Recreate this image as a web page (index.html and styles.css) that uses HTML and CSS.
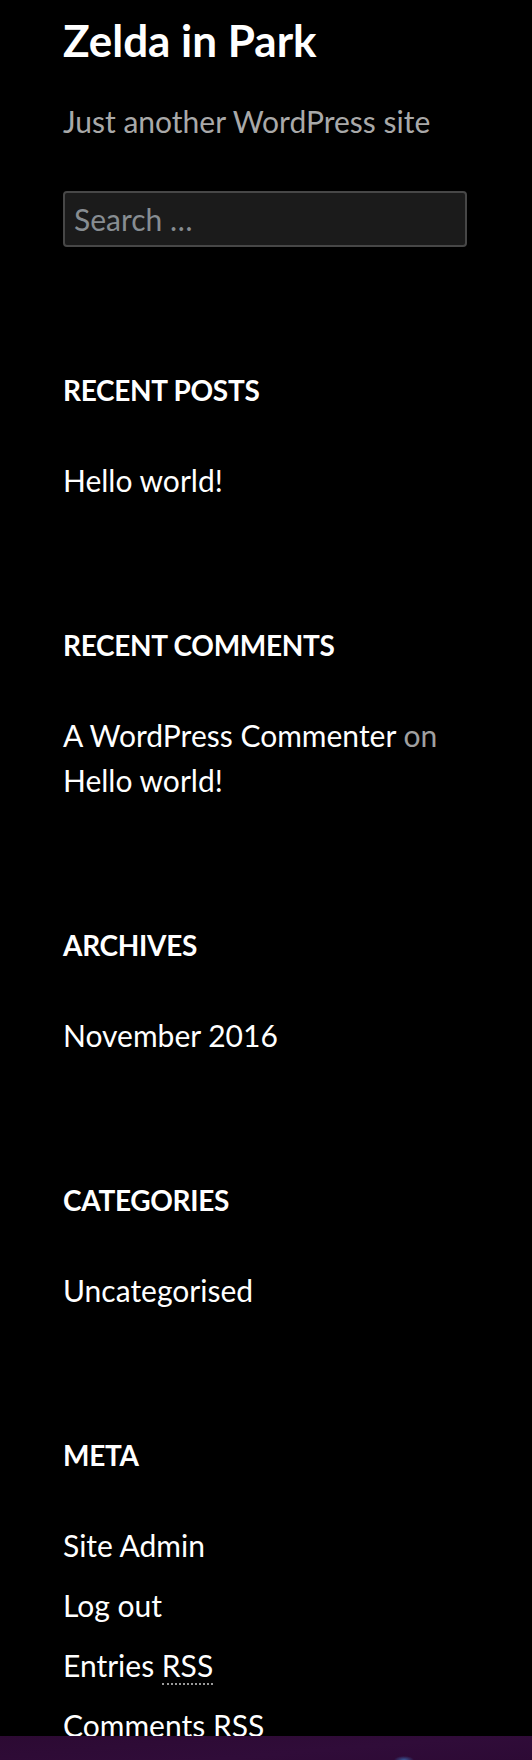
FILE: index.html
```html
<!DOCTYPE html>
<html lang="en">
<head>
<meta charset="utf-8">
<title>Zelda in Park</title>
<link rel="stylesheet" href="styles.css">
</head>
<body>
<div class="site">
  <header class="site-header">
    <h1 class="site-title"><a href="#">Zelda in Park</a></h1>
    <p class="site-description">Just another WordPress site</p>
    <form class="search-form">
      <input class="search-field" type="search" placeholder="Search …">
    </form>
  </header>

  <section class="widget">
    <h2 class="widget-title">Recent Posts</h2>
    <ul class="widget-list">
      <li><a href="#">Hello world!</a></li>
    </ul>
  </section>

  <section class="widget">
    <h2 class="widget-title">Recent Comments</h2>
    <ul class="widget-list">
      <li><a href="#">A WordPress Commenter</a> <span class="muted">on</span> <a href="#">Hello world!</a></li>
    </ul>
  </section>

  <section class="widget">
    <h2 class="widget-title">Archives</h2>
    <ul class="widget-list">
      <li><a href="#">November 2016</a></li>
    </ul>
  </section>

  <section class="widget">
    <h2 class="widget-title">Categories</h2>
    <ul class="widget-list">
      <li><a href="#">Uncategorised</a></li>
    </ul>
  </section>

  <section class="widget">
    <h2 class="widget-title">Meta</h2>
    <ul class="widget-list meta-list">
      <li><a href="#">Site Admin</a></li>
      <li><a href="#">Log out</a></li>
      <li><a href="#">Entries <abbr title="Really Simple Syndication">RSS</abbr></a></li>
      <li><a href="#">Comments <abbr title="Really Simple Syndication">RSS</abbr></a></li>
    </ul>
  </section>
</div>
<div class="taskbar"></div>
</body>
</html>
```

FILE: styles.css
```css
html, body {
  margin: 0;
  padding: 0;
  background: #000;
}

body {
  font-family: Lato, "Open Sans", "Liberation Sans", sans-serif;
  color: #fff;
}

a {
  color: #fff;
  text-decoration: none;
}

.site {
  padding: 10px 65px 40px 63px;
}

.site-title {
  margin: 0;
  font-size: 44px;
  font-weight: 700;
  line-height: 60px;
}

.site-description {
  margin: 29px 0 0;
  font-size: 30px;
  line-height: 45px;
  color: #a9a9a9;
}

.search-form {
  margin: 47px 0 0;
}

.search-field {
  display: block;
  box-sizing: border-box;
  width: 404px;
  height: 56px;
  margin: 0;
  padding: 0 9px;
  border: 2px solid #474747;
  border-radius: 4px;
  background: #1b1b1b;
  font-family: inherit;
  font-size: 30px;
  color: #ddd;
  outline: none;
  -webkit-appearance: none;
  appearance: none;
}

.search-field::placeholder {
  color: #878d92;
}

.site-header {
  margin-bottom: 123px;
}

.widget {
  margin-bottom: 122px;
}

.widget-title {
  margin: 0 0 48px;
  font-size: 28px;
  font-weight: 700;
  line-height: 40px;
  text-transform: uppercase;
  letter-spacing: -0.3px;
}

.widget-list {
  list-style: none;
  margin: 0;
  padding: 0;
  font-size: 30px;
  line-height: 45px;
}

.meta-list li + li {
  margin-top: 15px;
}

.muted {
  color: #a0a0a0;
}

abbr {
  text-decoration: none;
  border-bottom: 2px dotted #9a9a9a;
}

.taskbar {
  position: fixed;
  left: 0;
  right: 0;
  bottom: 0;
  height: 24px;
  background:
    radial-gradient(ellipse 10px 4px at 404px 24px, #3a5a9a 0%, rgba(58, 90, 154, 0) 100%),
    linear-gradient(175deg, #2c0a33 0%, #300c39 60%, #2d0a35 100%);
}
```
